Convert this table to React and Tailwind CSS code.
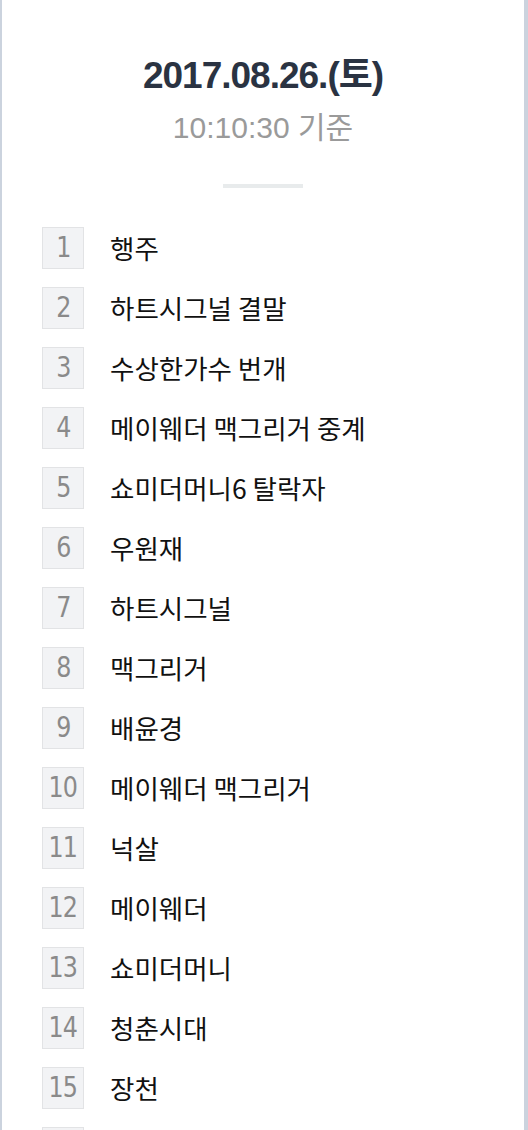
const KEYWORDS = [
  "행주",
  "하트시그널 결말",
  "수상한가수 번개",
  "메이웨더 맥그리거 중계",
  "쇼미더머니6 탈락자",
  "우원재",
  "하트시그널",
  "맥그리거",
  "배윤경",
  "메이웨더 맥그리거",
  "넉살",
  "메이웨더",
  "쇼미더머니",
  "청춘시대",
  "장천",
  "행주 결혼",
];

function RankRow({ rank, keyword }) {
  return (
    <li className="h-[60px] flex items-center">
      <span className="w-[42px] h-[42px] shrink-0 flex items-center justify-center bg-[#f2f3f5] border border-[#e2e3e5] text-[#8a8a8a] font-['DejaVu_Sans',sans-serif]">
        <span className="inline-block text-[28px] leading-none tracking-[-1px] scale-x-[0.85]">{rank}</span>
      </span>
      <span className="ml-[26px] text-[26.5px] leading-[36px] text-[#111] font-['Noto_Sans_CJK_KR',sans-serif] whitespace-nowrap">
        {keyword}
      </span>
    </li>
  );
}

export default function App() {
  return (
    <div className="min-h-[1130px] bg-white border-l-2 border-r-4 border-[#cbd3de] font-['Liberation_Sans','Noto_Sans_CJK_KR',sans-serif]">
      <header className="pt-[54px] flex flex-col items-center">
        <h1 className="text-[37px] leading-[44px] font-bold tracking-[-1px] text-[#2a3342]">
          2017.08.26.(토)
        </h1>
        <p className="mt-[12px] text-[30px] leading-[36px] text-[#9a9a9a]">10:10:30 기준</p>
        <div className="mt-[38px] w-[80px] h-[4px] bg-[#e8ebec]" />
      </header>
      <ol className="mt-[30px] pl-[40px] pr-6">
        {KEYWORDS.map((k, i) => (
          <RankRow key={k} rank={i + 1} keyword={k} />
        ))}
      </ol>
    </div>
  );
}
